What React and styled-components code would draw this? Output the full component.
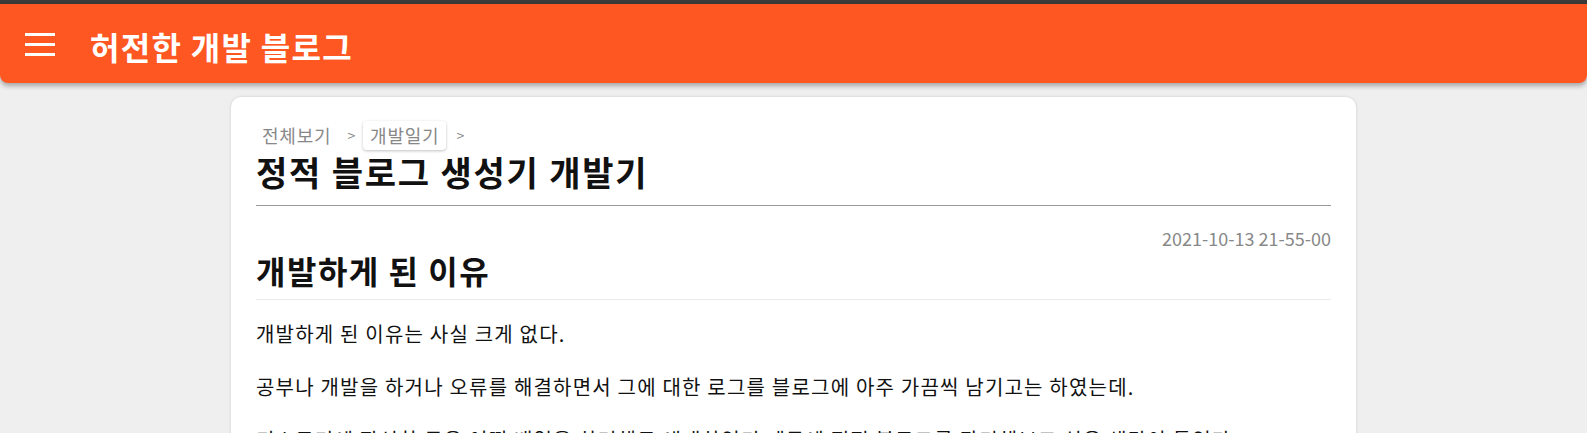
import styled, { createGlobalStyle } from 'styled-components';

const GlobalStyle = createGlobalStyle`
  html, body {
    margin: 0;
    padding: 0;
    background: #efefef;
    font-family: "Noto Sans CJK KR", "Noto Sans", sans-serif;
    color: #111;
  }
`;

const Page = styled.div`
  border-top: 4px solid #3a3a3a;
  min-height: 100vh;
  box-sizing: border-box;
`;

const Header = styled.header`
  height: 79px;
  background: #ff5722;
  border-radius: 0 0 8px 8px;
  box-shadow: 0 3px 5px rgba(0, 0, 0, 0.3);
  display: flex;
  align-items: center;
  padding-left: 25px;
  gap: 35px;
`;

const MenuButton = styled.div`
  width: 30px;
  display: flex;
  flex-direction: column;
  gap: 7px;
  margin-top: 2px;

  span {
    display: block;
    height: 3px;
    background: #fff;
  }
`;

const SiteTitle = styled.h1`
  margin: 0;
  color: #fff;
  font-size: 32px;
  letter-spacing: 1.3px;
  font-weight: 700;
  padding-top: 4px;
`;

const Main = styled.main`
  display: flex;
  justify-content: center;
  padding-top: 14px;
`;

const Card = styled.article`
  width: 1125px;
  box-sizing: border-box;
  background: #fff;
  border-radius: 10px;
  box-shadow: 0 0 3px rgba(0, 0, 0, 0.15);
  padding: 24px 25px 40px;
`;

const Breadcrumb = styled.nav`
  display: flex;
  align-items: center;
  font-size: 18px;
  letter-spacing: 0.8px;
  color: #888;
  line-height: 29px;
`;

const Crumb = styled.span`
  padding: 0 ${(p) => (p.$chip ? '7px' : '6px')};
  border-radius: 4px;
  box-shadow: ${(p) => (p.$chip ? '0 1px 3px rgba(0, 0, 0, 0.25)' : 'none')};
`;

const Sep = styled.span`
  font-size: 14px;
  padding: 0 7px 0 10px;
`;

const Title = styled.h1`
  margin: 0;
  font-size: 34px;
  letter-spacing: 1.8px;
  font-weight: 700;
  line-height: 43px;
  padding-bottom: 12px;
  border-bottom: 1px solid #999;
`;

const DateLine = styled.div`
  text-align: right;
  color: #888;
  font-size: 18px;
  margin-top: 20px;
  line-height: 24px;
`;

const SectionTitle = styled.h2`
  margin: 0;
  font-size: 32px;
  letter-spacing: 1.5px;
  font-weight: 700;
  line-height: 40px;
  padding-bottom: 9px;
  border-bottom: 1px solid #eaeaea;
`;

const Paragraph = styled.p`
  margin: 0;
  font-size: 20px;
  letter-spacing: 1.2px;
  line-height: 53px;
  &:first-of-type {
    margin-top: 7px;
  }
`;

export default function App() {
  return (
    <Page>
      <GlobalStyle />
      <Header>
        <MenuButton>
          <span />
          <span />
          <span />
        </MenuButton>
        <SiteTitle>허전한 개발 블로그</SiteTitle>
      </Header>
      <Main>
        <Card>
          <Breadcrumb>
            <Crumb>전체보기</Crumb>
            <Sep>&gt;</Sep>
            <Crumb $chip>개발일기</Crumb>
            <Sep>&gt;</Sep>
          </Breadcrumb>
          <Title>정적 블로그 생성기 개발기</Title>
          <DateLine>2021-10-13 21-55-00</DateLine>
          <SectionTitle>개발하게 된 이유</SectionTitle>
          <Paragraph>개발하게 된 이유는 사실 크게 없다.</Paragraph>
          <Paragraph>공부나 개발을 하거나 오류를 해결하면서 그에 대한 로그를 블로그에 아주 가끔씩 남기고는 하였는데.</Paragraph>
          <Paragraph>티스토리에 작성한 글은 어떤 배열을 하려해도 애매하였기 때문에 정적 블로그를 관리해보고 싶은 생각이 들었다.</Paragraph>
        </Card>
      </Main>
    </Page>
  );
}
